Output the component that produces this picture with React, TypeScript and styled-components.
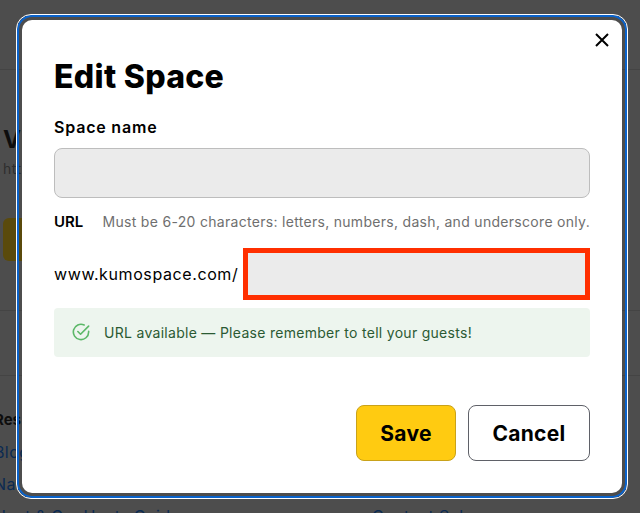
import React from 'react';
import styled, {createGlobalStyle} from 'styled-components';

const GlobalStyle = createGlobalStyle`
  html, body {
    margin: 0;
    padding: 0;
    background: #4d4d4d;
  }
  * {
    box-sizing: border-box;
  }
`;

const fontStack = `"Inter", "Liberation Sans", sans-serif`;

const Page = styled.div`
  position: relative;
  width: 640px;
  height: 513px;
  overflow: hidden;
  background: #4d4d4d;
  font-family: ${fontStack};
`;

const Behind = styled.div`
  display: flex;
  flex-direction: column;
  padding-top: 69px;
`;

const Rule = styled.div`
  flex: none;
  height: 1px;
  background: #444444;
`;

const SpaceBlock = styled.div`
  flex: none;
  height: 240px;
  padding: 58px 0 0 3px;
`;

const SpaceTitle = styled.div`
  font-size: 24px;
  line-height: 24px;
  font-weight: 700;
  color: #0d0d0d;
`;

const SpaceUrl = styled.div`
  margin-top: 9px;
  font-size: 14px;
  line-height: 16px;
  letter-spacing: 0.5px;
  color: #2e2e2e;
`;

const EnterButton = styled.div`
  width: 80px;
  height: 43px;
  margin-top: 41px;
  border-radius: 6px;
  background: #5a4a0c;
`;

const Spacer = styled.div`
  flex: none;
  height: 64px;
`;

const Links = styled.div`
  flex: none;
  display: grid;
  grid-template-columns: 378px 1fr;
  padding-top: 32px;
  margin-left: -6px;
`;

const LinkColumn = styled.div`
  display: flex;
  flex-direction: column;
  gap: 8px;
`;

const LinkHeading = styled.div`
  font-size: 15px;
  line-height: 24px;
  font-weight: 700;
  color: #0d0d0d;
`;

const SiteLink = styled.div`
  font-size: 16px;
  line-height: 24px;
  letter-spacing: 0.4px;
  white-space: nowrap;
  color: #0b2a52;
`;

const Modal = styled.div`
  position: absolute;
  left: 22px;
  top: 20px;
  width: 600px;
  height: 473px;
  display: flex;
  flex-direction: column;
  padding: 35px 32px 32px;
  border-radius: 10px;
  background: #ffffff;
  outline: 2px solid #0a63cc;
  outline-offset: 3px;

  &::before {
    content: '';
    position: absolute;
    inset: -6px;
    border-radius: 15px;
    border: 1px solid #ffffff;
    pointer-events: none;
  }
`;

const CloseButton = styled.button`
  position: absolute;
  top: 11px;
  right: 11px;
  width: 18px;
  height: 18px;
  padding: 0;
  border: 0;
  background: none;
  display: flex;
`;

const Title = styled.h1`
  margin: 0;
  font-size: 32px;
  line-height: 44px;
  font-weight: 800;
  letter-spacing: 0.3px;
  color: #000000;
`;

const FieldLabel = styled.label`
  margin-top: 16px;
  font-size: 16px;
  line-height: 24px;
  font-weight: 600;
  letter-spacing: 0.8px;
  color: #000000;
`;

const NameInput = styled.div`
  flex: none;
  height: 50px;
  margin-top: 9px;
  border: 1px solid #bdbdbd;
  border-radius: 8px;
  background: #ebebeb;
`;

const UrlRow = styled.div`
  display: flex;
  align-items: center;
  justify-content: space-between;
  margin-top: 11px;
  height: 24px;
`;

const UrlLabel = styled.span`
  font-size: 15px;
  font-weight: 600;
  color: #000000;
`;

const UrlHint = styled.span`
  font-size: 14px;
  color: #6f6f6f;
  letter-spacing: 0.3px;
  white-space: nowrap;
`;

const SlugRow = styled.div`
  display: flex;
  align-items: center;
  gap: 5px;
  margin-top: 15px;
`;

const Domain = styled.span`
  font-size: 16px;
  letter-spacing: 0.6px;
  color: #000000;
  white-space: nowrap;
`;

const SlugInput = styled.div`
  flex: 1;
  height: 52px;
  border: 5px solid #ff2f00;
  background: #ebebeb;
`;

const Notice = styled.div`
  display: flex;
  align-items: center;
  gap: 14px;
  height: 49px;
  margin-top: 8px;
  padding-left: 18px;
  padding-bottom: 1px;
  border-radius: 4px;
  background: #edf5ee;
  font-size: 14px;
  letter-spacing: 0.29px;
  color: #2b5a33;
`;

const Actions = styled.div`
  display: flex;
  justify-content: flex-end;
  gap: 12px;
  margin-top: 48px;
`;

const ActionButton = styled.button<{$primary?: boolean}>`
  height: 56px;
  width: ${props => (props.$primary ? '100px' : '122px')};
  border-radius: 8px;
  border: 1px solid ${props => (props.$primary ? '#c9a21a' : '#5f6168')};
  background: ${props => (props.$primary ? '#ffcb11' : '#ffffff')};
  font-family: ${fontStack};
  font-size: 21px;
  font-weight: 700;
  letter-spacing: 0.3px;
  color: #000000;
`;

export default function App() {
  return (
    <Page>
      <GlobalStyle />
      <Behind>
        <Rule />
        <SpaceBlock>
          <SpaceTitle>Vi</SpaceTitle>
          <SpaceUrl>htt</SpaceUrl>
          <EnterButton />
        </SpaceBlock>
        <Rule />
        <Spacer />
        <Rule />
        <Links>
          <LinkColumn>
            <LinkHeading>Res</LinkHeading>
            <SiteLink>Blog</SiteLink>
            <SiteLink>Na</SiteLink>
            <SiteLink>Host &amp; Go: Hosts Guide</SiteLink>
          </LinkColumn>
          <LinkColumn>
            <LinkHeading>&nbsp;</LinkHeading>
            <SiteLink>&nbsp;</SiteLink>
            <SiteLink>&nbsp;</SiteLink>
            <SiteLink>Contact Sales</SiteLink>
          </LinkColumn>
        </Links>
      </Behind>
      <Modal>
        <CloseButton aria-label="Close">
          <svg width="18" height="18" viewBox="0 0 18 18" fill="none">
            <path d="M3 3L15 15M15 3L3 15" stroke="#000" strokeWidth="2" />
          </svg>
        </CloseButton>
        <Title>Edit Space</Title>
        <FieldLabel>Space name</FieldLabel>
        <NameInput />
        <UrlRow>
          <UrlLabel>URL</UrlLabel>
          <UrlHint>Must be 6-20 characters: letters, numbers, dash, and underscore only.</UrlHint>
        </UrlRow>
        <SlugRow>
          <Domain>www.kumospace.com/</Domain>
          <SlugInput />
        </SlugRow>
        <Notice>
          <svg width="18" height="18" viewBox="0 0 20 20" fill="none">
            <path
              d="M18.5 9.2V10a8.5 8.5 0 1 1-5-7.8"
              stroke="#5cb868"
              strokeWidth="1.8"
              strokeLinecap="round"
            />
            <path
              d="M6.5 9.5L9.5 12.5L18.5 3.5"
              stroke="#5cb868"
              strokeWidth="1.8"
              strokeLinecap="round"
              strokeLinejoin="round"
            />
          </svg>
          URL available — Please remember to tell your guests!
        </Notice>
        <Actions>
          <ActionButton $primary>Save</ActionButton>
          <ActionButton>Cancel</ActionButton>
        </Actions>
      </Modal>
    </Page>
  );
}
